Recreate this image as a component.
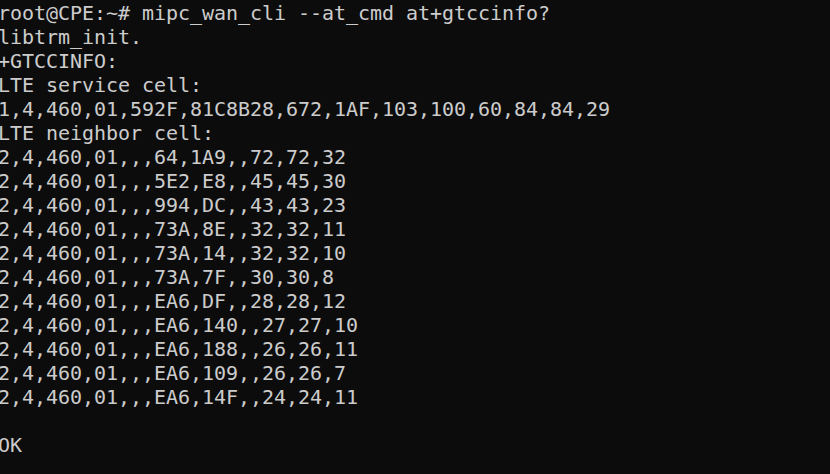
import React from 'react';

const lines = [
    'root@CPE:~# mipc_wan_cli --at_cmd at+gtccinfo?',
    'libtrm_init.',
    '+GTCCINFO:',
    'LTE service cell:',
    '1,4,460,01,592F,81C8B28,672,1AF,103,100,60,84,84,29',
    'LTE neighbor cell:',
    '2,4,460,01,,,64,1A9,,72,72,32',
    '2,4,460,01,,,5E2,E8,,45,45,30',
    '2,4,460,01,,,994,DC,,43,43,23',
    '2,4,460,01,,,73A,8E,,32,32,11',
    '2,4,460,01,,,73A,14,,32,32,10',
    '2,4,460,01,,,73A,7F,,30,30,8',
    '2,4,460,01,,,EA6,DF,,28,28,12',
    '2,4,460,01,,,EA6,140,,27,27,10',
    '2,4,460,01,,,EA6,188,,26,26,11',
    '2,4,460,01,,,EA6,109,,26,26,7',
    '2,4,460,01,,,EA6,14F,,24,24,11',
    '',
    'OK',
];

export default function App() {
    return (
        <div className="w-[830px] h-[474px] overflow-hidden bg-[#0c0c0c] text-[#cccccc]">
            <div className="-ml-[2px] pt-[1px] font-['DejaVu_Sans_Mono',monospace] text-[20px] leading-[24px] tracking-[-0.04px]">
                {lines.map((l, i) => (
                    <div key={i} className="whitespace-pre h-[24px]">{l}</div>
                ))}
            </div>
        </div>
    );
}
